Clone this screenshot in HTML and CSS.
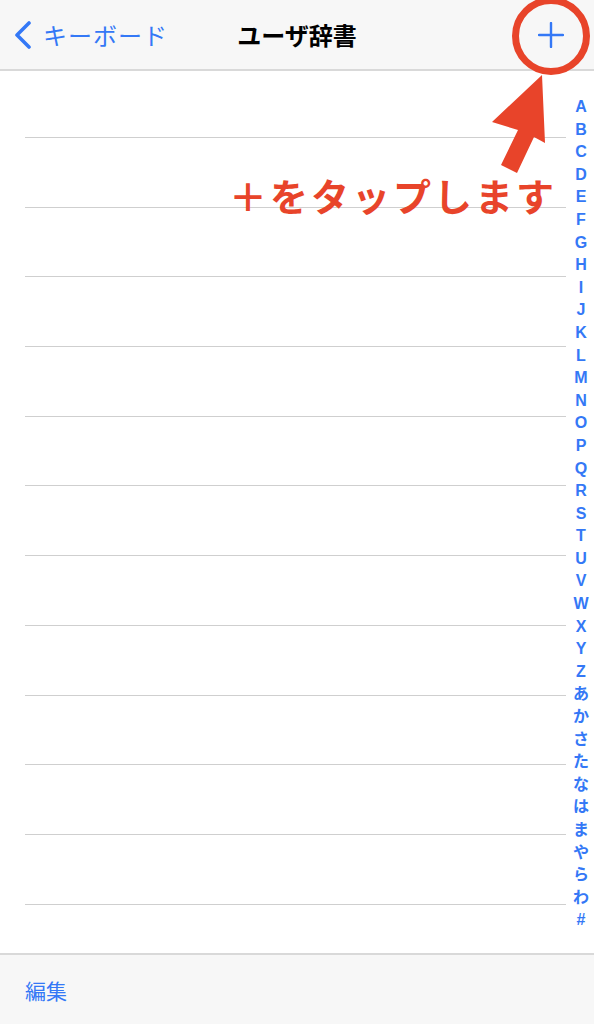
FILE: index.html
```html
<!DOCTYPE html>
<html lang="ja">
<head>
    <meta charset="UTF-8">
    <meta name="viewport" content="width=device-width, initial-scale=1.0">
    <title>ユーザ辞書</title>
    <link rel="stylesheet" href="styles.css">
</head>
<body>

<div id="screen">
    <div class="navbar">
        <div class="nav-back">
            <svg width="20" height="28" viewBox="0 0 20 28"><path d="M16 2 L4 14 L16 26" fill="none" stroke="#3478f6" stroke-width="3.6" stroke-linecap="round" stroke-linejoin="round"/></svg>
            <span>キーボード</span>
        </div>
        <div class="nav-title">ユーザ辞書</div>
        <div class="nav-add">
            <svg width="26" height="26" viewBox="0 0 26 26"><path d="M13 1 V25 M1 13 H25" stroke="#3478f6" stroke-width="2.4" stroke-linecap="round"/></svg>
        </div>
    </div>

    <div class="list">
        <div class="rows">
            <div class="row"></div>
            <div class="row"></div>
            <div class="row"></div>
            <div class="row"></div>
            <div class="row"></div>
            <div class="row"></div>
            <div class="row"></div>
            <div class="row"></div>
            <div class="row"></div>
            <div class="row"></div>
            <div class="row"></div>
            <div class="row"></div>
        </div>
        <div class="index">
            <span>A</span><span>B</span><span>C</span><span>D</span><span>E</span><span>F</span>
            <span>G</span><span>H</span><span>I</span><span>J</span><span>K</span><span>L</span>
            <span>M</span><span>N</span><span>O</span><span>P</span><span>Q</span><span>R</span>
            <span>S</span><span>T</span><span>U</span><span>V</span><span>W</span><span>X</span>
            <span>Y</span><span>Z</span><span>あ</span><span>か</span><span>さ</span><span>た</span>
            <span>な</span><span>は</span><span>ま</span><span>や</span><span>ら</span><span>わ</span>
            <span>#</span>
        </div>
    </div>

    <div class="toolbar">
        <span>編集</span>
    </div>

    <!-- annotation -->
    <div class="ring"></div>
    <svg class="arrow" width="80" height="100" viewBox="0 0 80 100">
        <polygon points="52,0 55,68 44,62 27,98 11,90 28,55 2,47" fill="#e8442a"/>
    </svg>
    <div class="note">＋をタップします</div>
</div>

</body>
</html>
```

FILE: styles.css
```css
body {
    margin: 0;
    font-family: "Liberation Sans", "Noto Sans CJK JP", sans-serif;
    background: #fff;
}

#screen {
    position: relative;
    width: 594px;
    height: 1024px;
    display: flex;
    flex-direction: column;
    overflow: hidden;
}

.navbar {
    height: 69px;
    background: #f7f7f7;
    border-bottom: 2px solid #d9d9d9;
    display: flex;
    align-items: center;
    position: relative;
}

.nav-back {
    display: flex;
    align-items: center;
    gap: 10px;
    padding-left: 13px;
    color: #3478f6;
    font-size: 24px;
    letter-spacing: 1px;
}

.nav-title {
    position: absolute;
    left: 0;
    right: 0;
    text-align: center;
    font-size: 24px;
    font-weight: bold;
    color: #000;
    pointer-events: none;
}

.nav-add {
    margin-left: auto;
    margin-right: 30px;
    display: flex;
}

.list {
    flex: 1;
    display: flex;
}

.rows {
    flex: 1;
    padding-left: 25px;
}

.row {
    height: 68.7px;
    border-bottom: 1px solid #cfcfcf;
}

.row:first-child {
    height: 66px;
}

.index {
    width: 26px;
    display: flex;
    flex-direction: column;
    align-items: center;
    padding-top: 25px;
    padding-left: 2px;
    color: #3478f6;
    font-size: 16px;
    font-weight: bold;
}

.index span {
    height: 22.6px;
    line-height: 22.6px;
}

.toolbar {
    height: 69px;
    background: #f7f7f7;
    border-top: 2px solid #d9d9d9;
    display: flex;
    align-items: center;
    padding-left: 25px;
    color: #3478f6;
    font-size: 21px;
}

.ring {
    position: absolute;
    left: 512px;
    top: -3px;
    width: 64px;
    height: 64px;
    border: 7px solid #e8442a;
    border-radius: 50%;
}

.arrow {
    position: absolute;
    left: 490px;
    top: 75px;
}

.note {
    position: absolute;
    left: 229px;
    top: 167px;
    color: #e8442a;
    font-size: 38px;
    font-weight: bold;
    letter-spacing: 3px;
}
```
